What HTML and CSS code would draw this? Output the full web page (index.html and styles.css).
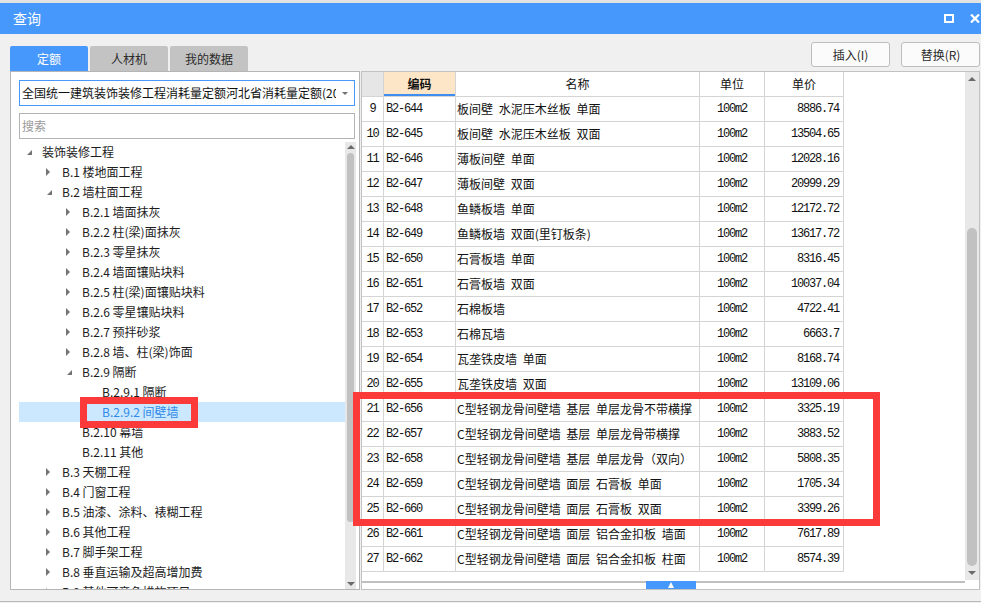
FILE: index.html
```html
<!DOCTYPE html>
<html lang="zh-CN">
<head>
<meta charset="utf-8">
<title>查询</title>
<link rel="stylesheet" href="styles.css">
</head>
<body>
<div class="window">
  <div class="titlebar">
    <span class="title">查询</span>
    <div class="controls">
      <svg width="10" height="9" viewBox="0 0 10 9"><rect x="1" y="1" width="8" height="7" fill="none" stroke="#fff" stroke-width="2"/></svg>
      <svg width="10" height="9" viewBox="0 0 10 9"><path d="M1 0.5 L9 8.5 M9 0.5 L1 8.5" stroke="#fff" stroke-width="2.2"/></svg>
    </div>
  </div>

  <div class="toolbar">
    <div class="tabs">
      <div class="tab active">定额</div>
      <div class="tab">人材机</div>
      <div class="tab">我的数据</div>
    </div>
    <div class="buttons">
      <button class="btn">插入(I)</button>
      <button class="btn">替换(R)</button>
    </div>
  </div>

  <div class="main">
    <div class="left-panel">
      <div class="combo">
        <span class="combo-text">全国统一建筑装饰装修工程消耗量定额河北省消耗量定额(2012)</span>
        <span class="combo-arrow"></span>
      </div>
      <div class="search">搜索</div>
      <div class="tree">
        <div class="tree-rows">
          <div class="row l0"><span class="arrow e"></span><span>装饰装修工程</span></div>
          <div class="row l1"><span class="arrow c"></span><span>B.1 楼地面工程</span></div>
          <div class="row l1"><span class="arrow e"></span><span>B.2 墙柱面工程</span></div>
          <div class="row l2"><span class="arrow c"></span><span>B.2.1 墙面抹灰</span></div>
          <div class="row l2"><span class="arrow c"></span><span>B.2.2 柱(梁)面抹灰</span></div>
          <div class="row l2"><span class="arrow c"></span><span>B.2.3 零星抹灰</span></div>
          <div class="row l2"><span class="arrow c"></span><span>B.2.4 墙面镶贴块料</span></div>
          <div class="row l2"><span class="arrow c"></span><span>B.2.5 柱(梁)面镶贴块料</span></div>
          <div class="row l2"><span class="arrow c"></span><span>B.2.6 零星镶贴块料</span></div>
          <div class="row l2"><span class="arrow c"></span><span>B.2.7 预拌砂浆</span></div>
          <div class="row l2"><span class="arrow c"></span><span>B.2.8 墙、柱(梁)饰面</span></div>
          <div class="row l2"><span class="arrow e"></span><span>B.2.9 隔断</span></div>
          <div class="row l3"><span class="arrow"></span><span>B.2.9.1 隔断</span></div>
          <div class="row l3 selected"><span class="arrow"></span><span>B.2.9.2 间壁墙</span></div>
          <div class="row l2"><span class="arrow"></span><span>B.2.10 幕墙</span></div>
          <div class="row l2"><span class="arrow"></span><span>B.2.11 其他</span></div>
          <div class="row l1"><span class="arrow c"></span><span>B.3 天棚工程</span></div>
          <div class="row l1"><span class="arrow c"></span><span>B.4 门窗工程</span></div>
          <div class="row l1"><span class="arrow c"></span><span>B.5 油漆、涂料、裱糊工程</span></div>
          <div class="row l1"><span class="arrow c"></span><span>B.6 其他工程</span></div>
          <div class="row l1"><span class="arrow c"></span><span>B.7 脚手架工程</span></div>
          <div class="row l1"><span class="arrow c"></span><span>B.8 垂直运输及超高增加费</span></div>
          <div class="row l1"><span class="arrow c"></span><span>B.9 其他可竞争措施项目</span></div>
        </div>
        <div class="tree-scroll">
          <div class="sb-up"></div>
          <div class="tree-thumb"></div>
          <div class="sb-space"></div>
          <div class="sb-down"></div>
        </div>
      </div>
      <div class="mark mark-tree"></div>
    </div>

    <div class="right-pane">
      <div class="grid-wrap">
        <div class="table">
          <div class="trow thead">
            <div class="rn"></div>
            <div class="sorted">编码</div>
            <div>名称</div>
            <div>单位</div>
            <div>单价</div>
          </div>
          <div class="trow"><div class="rn">9</div><div class="code">B2-644</div><div class="name">板间壁 水泥压木丝板 单面</div><div class="unit">100m2</div><div class="price">8886.74</div></div>
          <div class="trow"><div class="rn">10</div><div class="code">B2-645</div><div class="name">板间壁 水泥压木丝板 双面</div><div class="unit">100m2</div><div class="price">13504.65</div></div>
          <div class="trow"><div class="rn">11</div><div class="code">B2-646</div><div class="name">薄板间壁 单面</div><div class="unit">100m2</div><div class="price">12028.16</div></div>
          <div class="trow"><div class="rn">12</div><div class="code">B2-647</div><div class="name">薄板间壁 双面</div><div class="unit">100m2</div><div class="price">20999.29</div></div>
          <div class="trow"><div class="rn">13</div><div class="code">B2-648</div><div class="name">鱼鳞板墙 单面</div><div class="unit">100m2</div><div class="price">12172.72</div></div>
          <div class="trow"><div class="rn">14</div><div class="code">B2-649</div><div class="name">鱼鳞板墙 双面(里钉板条)</div><div class="unit">100m2</div><div class="price">13617.72</div></div>
          <div class="trow"><div class="rn">15</div><div class="code">B2-650</div><div class="name">石膏板墙 单面</div><div class="unit">100m2</div><div class="price">8316.45</div></div>
          <div class="trow"><div class="rn">16</div><div class="code">B2-651</div><div class="name">石膏板墙 双面</div><div class="unit">100m2</div><div class="price">10037.04</div></div>
          <div class="trow"><div class="rn">17</div><div class="code">B2-652</div><div class="name">石棉板墙</div><div class="unit">100m2</div><div class="price">4722.41</div></div>
          <div class="trow"><div class="rn">18</div><div class="code">B2-653</div><div class="name">石棉瓦墙</div><div class="unit">100m2</div><div class="price">6663.7</div></div>
          <div class="trow"><div class="rn">19</div><div class="code">B2-654</div><div class="name">瓦垄铁皮墙 单面</div><div class="unit">100m2</div><div class="price">8168.74</div></div>
          <div class="trow"><div class="rn">20</div><div class="code">B2-655</div><div class="name">瓦垄铁皮墙 双面</div><div class="unit">100m2</div><div class="price">13109.06</div></div>
          <div class="trow"><div class="rn">21</div><div class="code">B2-656</div><div class="name">C型轻钢龙骨间壁墙 基层 单层龙骨不带横撑</div><div class="unit">100m2</div><div class="price">3325.19</div></div>
          <div class="trow"><div class="rn">22</div><div class="code">B2-657</div><div class="name">C型轻钢龙骨间壁墙 基层 单层龙骨带横撑</div><div class="unit">100m2</div><div class="price">3883.52</div></div>
          <div class="trow"><div class="rn">23</div><div class="code">B2-658</div><div class="name">C型轻钢龙骨间壁墙 基层 单层龙骨（双向）</div><div class="unit">100m2</div><div class="price">5808.35</div></div>
          <div class="trow"><div class="rn">24</div><div class="code">B2-659</div><div class="name">C型轻钢龙骨间壁墙 面层 石膏板 单面</div><div class="unit">100m2</div><div class="price">1705.34</div></div>
          <div class="trow"><div class="rn">25</div><div class="code">B2-660</div><div class="name">C型轻钢龙骨间壁墙 面层 石膏板 双面</div><div class="unit">100m2</div><div class="price">3399.26</div></div>
          <div class="trow"><div class="rn">26</div><div class="code">B2-661</div><div class="name">C型轻钢龙骨间壁墙 面层 铝合金扣板 墙面</div><div class="unit">100m2</div><div class="price">7617.89</div></div>
          <div class="trow"><div class="rn">27</div><div class="code">B2-662</div><div class="name">C型轻钢龙骨间壁墙 面层 铝合金扣板 柱面</div><div class="unit">100m2</div><div class="price">8574.39</div></div>
        </div>
        <div class="vscroll">
          <div class="sb-up big"></div>
          <div class="sb-space"></div>
          <div class="v-thumb"></div>
          <div class="sb-down big"></div>
        </div>
      </div>
      <div class="hscroll">
        <div class="htrack"><div class="hthumb"></div></div>
      </div>
      <div class="mark mark-table"></div>
    </div>
  </div>
</div>
</body>
</html>
```

FILE: styles.css
```css
* { box-sizing: border-box; }
html, body { margin: 0; padding: 0; }
body {
  width: 981px;
  height: 603px;
  overflow: hidden;
  background: #f0f0f0;
  font-family: "Noto Sans CJK SC", "Noto Sans", sans-serif;
  font-size: 12px;
  color: #1c1c1c;
}
.window {
  height: 602px;
  border-top: 3px solid #e2e2e2;
  border-bottom: 1px solid #b9b9b9;
  display: flex;
  flex-direction: column;
}

/* title bar */
.titlebar {
  flex: none;
  height: 31px;
  background: #4798fc;
  color: #fff;
  display: flex;
  align-items: center;
  justify-content: space-between;
  padding: 0 1px 0 13px;
}
.title { font-size: 14px; line-height: 31px; }
.controls { display: flex; align-items: center; gap: 16px; }
.controls svg { display: block; }

/* tabs + buttons */
.toolbar {
  flex: none;
  height: 37px;
  display: flex;
  justify-content: space-between;
  align-items: flex-start;
  padding: 0 1px 0 10px;
}
.tabs { display: flex; gap: 2px; margin-top: 12px; }
.tab {
  width: 78px;
  height: 25px;
  line-height: 25px;
  text-align: center;
  background: #c3c3c3;
  color: #2a2a2a;
  border-radius: 2px 2px 0 0;
}
.tab.active { background: #4798fc; color: #fff; }
.buttons { display: flex; gap: 11px; margin-top: 8px; }
.btn {
  width: 79px;
  height: 25px;
  padding: 0;
  border: 1px solid #bdbdbd;
  border-radius: 3px;
  background: #fbfbfb;
  font: inherit;
  color: #2a2a2a;
  line-height: 23px;
}

/* main */
.main {
  flex: none;
  height: 519px;
  display: flex;
  gap: 1px;
  padding-left: 10px;
}
.left-panel {
  position: relative;
  width: 350px;
  height: 519px;
  border: 1px solid #b5b5b5;
  background: #fff;
  display: flex;
  flex-direction: column;
  padding: 8px 0 0 8px;
}
.combo {
  flex: none;
  width: 336px;
  height: 26px;
  border: 1px solid #4798fc;
  display: flex;
  align-items: center;
  padding-left: 2px;
}
.combo-text {
  width: 314px;
  overflow: hidden;
  white-space: nowrap;
  line-height: 24px;
  color: #111;
}
.combo-arrow {
  width: 17px;
  height: 24px;
  display: flex;
  align-items: center;
  justify-content: center;
}
.combo-arrow::before {
  content: "";
  margin-left: 1px;
  border-left: 3px solid transparent;
  border-right: 3px solid transparent;
  border-top: 3px solid #707070;
}
.search {
  flex: none;
  margin-top: 7px;
  width: 336px;
  height: 26px;
  border: 1px solid #b3b3b3;
  color: #9a9a9a;
  padding-left: 2px;
  line-height: 24px;
}
.tree {
  margin-top: 3px;
  flex: 1;
  min-height: 0;
  display: flex;
}
.tree-rows { width: 326px; overflow: hidden; }
.row {
  height: 20px;
  line-height: 20px;
  display: flex;
  align-items: center;
  white-space: nowrap;
}
.row.l0 { padding-left: 5px; }
.row.l1 { padding-left: 25px; }
.row.l2 { padding-left: 45px; }
.row.l3 { padding-left: 65px; }
.row.selected { background: #cce8ff; color: #2f8ae8; }
.arrow {
  position: relative;
  flex: none;
  width: 14px;
  height: 20px;
  margin-right: 4px;
}
.arrow.c::before {
  content: "";
  position: absolute;
  left: 2px;
  top: 6px;
  border-left: 4px solid #747474;
  border-top: 4px solid transparent;
  border-bottom: 4px solid transparent;
}
.arrow.e::before {
  content: "";
  position: absolute;
  left: 3px;
  top: 8px;
  border-bottom: 5px solid #747474;
  border-left: 5px solid transparent;
}

/* scrollbars */
.tree-scroll {
  width: 11px;
  background: #e8e8e8;
  display: flex;
  flex-direction: column;
}
.sb-up, .sb-down {
  flex: none;
  height: 10px;
  display: flex;
  align-items: center;
  justify-content: center;
}
.sb-up::before {
  content: "";
  border-left: 4px solid transparent;
  border-right: 4px solid transparent;
  border-bottom: 4px solid #6a6a6a;
}
.sb-down::before {
  content: "";
  border-left: 4px solid transparent;
  border-right: 4px solid transparent;
  border-top: 4px solid #6a6a6a;
}
.sb-up.big, .sb-down.big { height: 14px; }
.sb-space { flex: 1; }
.tree-thumb {
  flex: none;
  margin: 1px auto 0;
  width: 7px;
  height: 369px;
  border-radius: 4px;
  background: #c1c1c1;
}

/* right pane */
.right-pane {
  position: relative;
  width: 619px;
  height: 519px;
  border: 1px solid #c2c2c2;
  background: #fff;
  display: flex;
  flex-direction: column;
}
.grid-wrap {
  flex: none;
  height: 508px;
  display: flex;
}
.table { flex: 1; overflow: hidden; }
.trow {
  display: grid;
  grid-template-columns: 22px 72px 244px 65px 79px;
  height: 25px;
}
.trow > div {
  border-right: 1px solid #d4d4d4;
  border-bottom: 1px solid #d4d4d4;
  line-height: 24px;
  white-space: nowrap;
  overflow: hidden;
  color: #111;
}
.thead > div { text-align: center; }
.thead .rn { background: #e6e6e6; }
.thead .sorted {
  background: #fde5c7;
  font-weight: bold;
  box-shadow: inset 0 -2px 0 #3d8ef0;
}
.rn, .code, .unit, .price {
  font-family: "Liberation Mono", "DejaVu Sans Mono", monospace;
  font-size: 12px;
  letter-spacing: -1.2px;
}
.rn { text-align: center; }
.code { padding-left: 2px; }
.name { padding-left: 1px; word-spacing: 3px; }
.unit { text-align: center; }
.price { text-align: right; padding-right: 4px; }

.vscroll {
  flex: none;
  width: 14px;
  background: #e8e8e8;
  display: flex;
  flex-direction: column;
}
.v-thumb {
  flex: none;
  margin: 0 auto;
  width: 10px;
  height: 338px;
  border-radius: 5px;
  background: #c1c1c1;
}
.hscroll { flex: 1; display: flex; }
.htrack {
  width: 603px;
  height: 9px;
  background: linear-gradient(#c0c0c0, #c0c0c0) 0 1px / 100% 2px no-repeat;
}
.hthumb {
  margin: 1px 0 0 284px;
  width: 50px;
  height: 8px;
  background: #4798fc;
  display: flex;
  justify-content: center;
  align-items: flex-end;
}
.hthumb::before {
  content: "";
  margin-bottom: 1px;
  border-left: 3px solid transparent;
  border-right: 3px solid transparent;
  border-bottom: 6px solid #fff;
}

/* red annotation boxes */
.mark {
  position: absolute;
  border: 7px solid #fd3a3a;
  z-index: 2;
}
.mark-tree { left: 69px; top: 325px; width: 118px; height: 31px; }
.mark-table { left: -9px; top: 320px; width: 527px; height: 134px; }
```
